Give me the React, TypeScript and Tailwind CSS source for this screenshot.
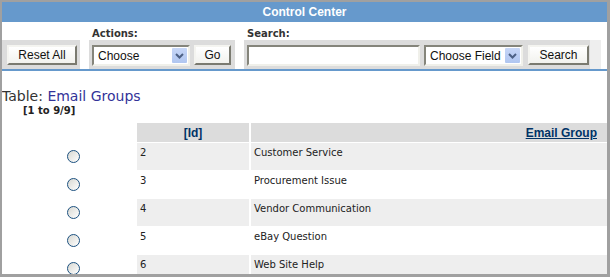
import React from 'react';

const rows = [
  { id: '2', name: 'Customer Service' },
  { id: '3', name: 'Procurement Issue' },
  { id: '4', name: 'Vendor Communication' },
  { id: '5', name: 'eBay Question' },
  { id: '6', name: 'Web Site Help' },
];

function XpButton({ label, className }: { label: string; className: string }) {
  return (
    <button
      className={`block h-[20px] border-2 border-t-[#f4f4f0] border-l-[#f4f4f0] border-r-[#7a7a70] border-b-[#7a7a70] bg-gradient-to-b from-white to-[#f2f2ee] text-[12px] leading-none text-[#111] font-['Liberation_Sans',Arial,sans-serif] ${className}`}
    >
      {label}
    </button>
  );
}

function XpSelect({ label, className }: { label: string; className: string }) {
  return (
    <div
      className={`h-[21px] flex items-center border-2 border-t-[#85857b] border-l-[#85857b] border-r-[#f0f0ea] border-b-[#f0f0ea] bg-white ${className}`}
    >
      <span className="flex-1 pl-[4px] text-[12px] leading-none text-[#111] font-['Liberation_Sans',Arial,sans-serif]">
        {label}
      </span>
      <span className="w-[15px] h-[15px] mr-px flex items-center justify-center bg-gradient-to-b from-[#c6d6f7] to-[#b0c6f0] rounded-[1px]">
        <svg width="9" height="6" viewBox="0 0 9 6">
          <path d="M1 1 L4.5 4.5 L8 1" fill="none" stroke="#4d6185" strokeWidth="2" />
        </svg>
      </span>
    </div>
  );
}

function Radio() {
  return (
    <span className="block w-[13px] h-[13px] rounded-full border border-[#1c5180] bg-gradient-to-br from-[#d8d8d2] to-white" />
  );
}

export default function App() {
  return (
    <div className="w-[610px] h-[277px] overflow-hidden border-l-2 border-t-2 border-r-[3px] border-b-[3px] border-[#a0a0a0] bg-white font-['DejaVu_Sans',Verdana,sans-serif]">
      {/* title bar */}
      <div className="h-[20px] bg-[#6699cc] flex items-center justify-center text-white font-bold text-[12px] font-['Liberation_Sans',Arial,sans-serif]">
        Control Center
      </div>

      {/* toolbar */}
      <div className="flex">
        <div className="w-[78px] flex flex-col">
          <div className="h-[18px]" />
          <div className="h-[29px] bg-[#dcdcdc] pl-[5px] pt-[5px] flex items-start">
            <XpButton label="Reset All" className="w-[70px]" />
          </div>
        </div>
        <div className="w-[146px] ml-[9px] flex flex-col">
          <div className="h-[18px] flex items-end pl-[3px] text-[10px] leading-[12px] font-bold text-[#333]">
            Actions:
          </div>
          <div className="h-[29px] bg-[#dcdcdc] pl-[3px] pt-[5px] flex items-start">
            <XpSelect label="Choose" className="w-[98px]" />
            <XpButton label="Go" className="w-[37px] ml-[4px]" />
          </div>
        </div>
        <div className="w-[346px] ml-[9px] flex flex-col">
          <div className="h-[18px] flex items-end pl-[3px] text-[10px] leading-[12px] font-bold text-[#333]">
            Search:
          </div>
          <div className="h-[29px] bg-[#dcdcdc] pl-[3px] pt-[5px] flex items-start">
            <div className="w-[173px] h-[21px] border-2 border-t-[#85857b] border-l-[#85857b] border-r-[#f0f0ea] border-b-[#f0f0ea] bg-white" />
            <XpSelect label="Choose Field" className="w-[99px] ml-[4px]" />
            <XpButton label="Search" className="w-[61px] ml-[5px]" />
          </div>
        </div>
        <div className="w-[11px] flex flex-col">
          <div className="h-[18px]" />
          <div className="h-[29px] bg-[#eeeeee]" />
        </div>
      </div>
      <div className="h-[2px] bg-[#6699cc]" />

      {/* table title */}
      <div className="pt-[17px] text-[14px] leading-[17px] text-[#333]">
        Table: <span className="text-[#333399]">Email Groups</span>
      </div>
      <div className="pl-[21px] text-[10px] leading-[12px] font-bold text-[#222]">[1 to 9/9]</div>

      {/* data grid */}
      <div className="mt-[6px] grid grid-cols-[135px_112px_1fr] gap-y-px">
        <div />
        <div className="h-[19px] flex items-center justify-center bg-[#dcdcdc] text-[12px] font-bold text-[#003366] font-['Liberation_Sans',Arial,sans-serif]">
          [Id]
        </div>
        <div className="h-[19px] ml-[2px] flex items-center justify-end pr-[10px] bg-[#dcdcdc] text-[12px] font-bold text-[#003366] underline font-['Liberation_Sans',Arial,sans-serif]">
          Email Group
        </div>
        {rows.map((r, i) => (
          <React.Fragment key={r.id}>
            <div className="h-[27px] flex items-center pl-[65px]">
              <Radio />
            </div>
            <div className={`h-[27px] pl-[3px] pt-[4px] text-[10px] leading-[12px] text-[#222] ${i % 2 === 0 ? 'bg-[#eeeeee]' : 'bg-white'}`}>
              {r.id}
            </div>
            <div className={`h-[27px] ml-[2px] pl-[3px] pt-[4px] text-[10px] leading-[12px] text-[#222] ${i % 2 === 0 ? 'bg-[#eeeeee]' : 'bg-white'}`}>
              {r.name}
            </div>
          </React.Fragment>
        ))}
      </div>
    </div>
  );
}
